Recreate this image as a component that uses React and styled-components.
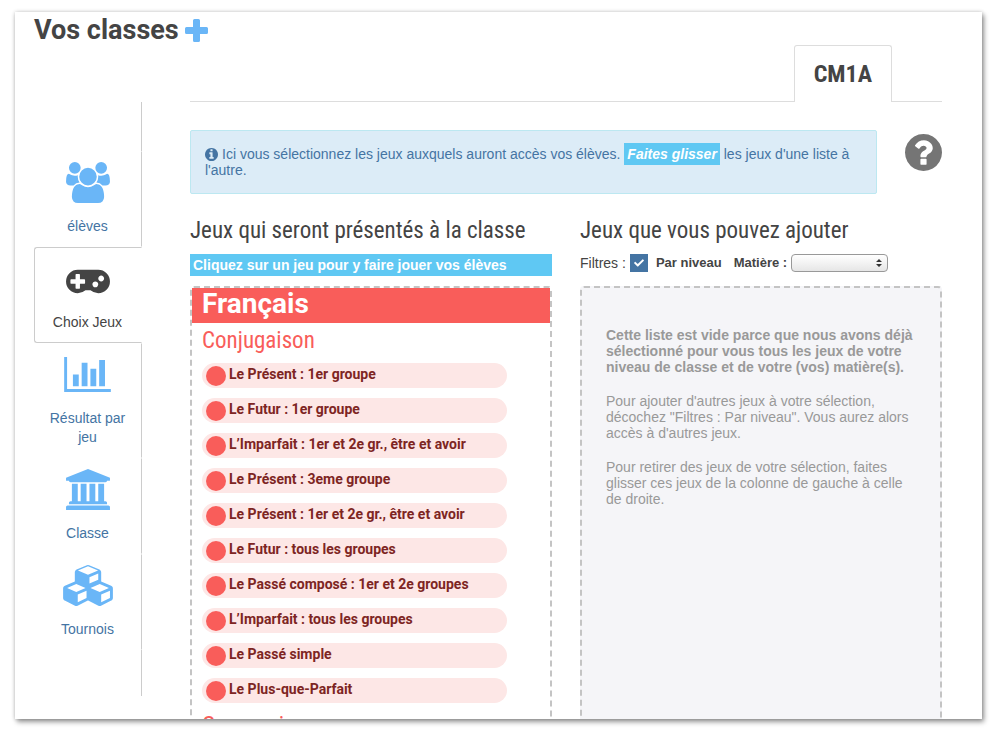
import React, { useState } from 'react';
import styled, { createGlobalStyle } from 'styled-components';
import { FaCheck } from 'react-icons/fa';

const sans = `'Liberation Sans', Arial, sans-serif`;
const condensed = `'Roboto Condensed', 'Liberation Sans Narrow', 'Liberation Sans', sans-serif`;
const rounded = `Roboto, 'Noto Sans', sans-serif`;

const GlobalStyle = createGlobalStyle`
  * {
    box-sizing: border-box;
  }

  body {
    margin: 0;
    background: #fff;
    color: #444;
    font-family: ${sans};
    font-size: 14px;
    line-height: 16px;
  }
`;

const PageWrap = styled.div`
  height: 100vh;
  padding: 12px 25px 26px 15px;
  overflow: hidden;
`;

const Sheet = styled.div`
  height: 100%;
  padding: 0 40px 0 19px;
  overflow: hidden;
  background: #fff;
  box-shadow: 0 0 4px rgba(0, 0, 0, 0.2), 2px 3px 5px rgba(0, 0, 0, 0.4);
`;

const TitleBar = styled.header`
  display: flex;
  align-items: center;
  gap: 6px;
  height: 33px;
  padding-top: 3px;
`;

const Title = styled.h1`
  margin: 0;
  font-family: ${rounded};
  font-size: 27px;
  line-height: 32px;
  font-weight: 700;
`;

const IconButton = styled.button`
  display: block;
  flex: none;
  padding: 0;
  border: 0;
  background: none;
  color: ${props => props.$color};
  cursor: pointer;
`;

const Icon = styled.svg`
  display: block;
  fill: currentColor;
`;

const Tabs = styled.nav`
  display: flex;
  justify-content: flex-end;
  margin-left: 156px;

  &::before {
    content: '';
    flex: 1;
    border-bottom: 1px solid #ddd;
  }

  &::after {
    content: '';
    width: 50px;
    border-bottom: 1px solid #ddd;
  }
`;

const Tab = styled.a`
  padding: 12px 19px;
  border: 1px solid #ddd;
  border-bottom: 0;
  border-radius: 3px 3px 0 0;
  color: #444;
  font-family: ${condensed};
  font-size: 24px;
  line-height: 32px;
  font-weight: 700;
  text-decoration: none;
`;

const Columns = styled.div`
  display: grid;
  grid-template-columns: 108px minmax(0, 1fr);
  gap: 48px;
  align-items: start;
`;

const SideNav = styled.nav`
  display: flex;
  flex-direction: column;

  &::before {
    content: '';
    height: 49px;
    border-right: 1px solid #ccc;
  }

  &::after {
    content: '';
    height: 46px;
    border-right: 1px solid #ccc;
  }
`;

const SideLink = styled.a`
  display: flex;
  flex-direction: column;
  align-items: center;
  padding: 9px 14px 10px 13px;
  border: 1px solid ${props => (props.$active ? '#ccc' : 'transparent')};
  border-right-color: ${props => (props.$active ? 'transparent' : '#ccc')};
  border-radius: ${props => (props.$active ? '3px 0 0 3px' : '0')};
  line-height: 19px;
  text-align: center;
  text-decoration: none;
`;

const SideIcon = styled.span`
  display: flex;
  align-items: center;
  height: 42px;
  margin-bottom: 14px;
  color: ${props => (props.$active ? '#444' : '#6ab6f7')};
`;

const SideLabel = styled.span`
  color: ${props => (props.$active ? '#444' : '#4474a3')};
`;

const Main = styled.main`
  padding-top: 28px;
`;

const InfoRow = styled.div`
  display: flex;
  align-items: flex-start;
  justify-content: space-between;
  gap: 28px;
  margin-bottom: 22px;
`;

const Info = styled.p`
  flex: 1;
  margin: 0;
  padding: 15px 14px;
  border: 1px solid #bce8f1;
  border-radius: 2px;
  background: #dcecf7;
  color: #4474a3;

  svg {
    display: inline-block;
    margin-right: 4px;
    vertical-align: -2px;
  }
`;

const Highlight = styled.em`
  padding: 3px;
  background: #5fc8f3;
  color: #fff;
  font-weight: 700;
`;

const HelpWrap = styled.div`
  padding-top: 4px;
`;

const Lists = styled.div`
  display: grid;
  grid-template-columns: repeat(2, minmax(0, 1fr));
  gap: 28px;
`;

const ListTitle = styled.h2`
  margin: 0 0 8px;
  font-family: ${condensed};
  font-size: 23px;
  line-height: 30px;
  font-weight: 400;
  white-space: nowrap;
`;

const Hint = styled.p`
  margin: 0 0 10px;
  padding: 3px;
  background: #5fc8f3;
  color: #fff;
  font-weight: 700;
`;

const GameList = styled.section`
  border: 2px dashed #c4c4c4;
  border-radius: 4px;
`;

const Subject = styled.h3`
  margin: 0;
  padding: 0 10px 3px;
  background: #f95d5a;
  color: #fff;
  font-family: ${rounded};
  font-size: 28px;
  line-height: 32px;
  font-weight: 700;
`;

const Topic = styled.h4`
  margin: 0;
  padding: 3px 10px 7px;
  color: #f95d5a;
  font-family: ${condensed};
  font-size: 23px;
  line-height: 30px;
  font-weight: 400;
`;

const Games = styled.ul`
  display: flex;
  flex-direction: column;
  gap: 10px;
  width: 88%;
  margin: 0 0 5px;
  padding: 0 0 0 10px;
  list-style: none;
`;

const Game = styled.a`
  display: flex;
  align-items: center;
  gap: 3px;
  height: 25px;
  padding: 0 4px;
  border-radius: 13px;
  background: #fde7e6;
  color: #7d2523;
  font-family: ${rounded};
  font-weight: 700;
  text-decoration: none;

  &::before {
    content: '';
    flex: none;
    width: 20px;
    height: 20px;
    border-radius: 50%;
    background: #f95d5a;
  }
`;

const GameName = styled.span`
  padding-bottom: 3px;
`;

const Filters = styled.form`
  display: flex;
  align-items: center;
  height: 18px;
  margin-bottom: 14px;
`;

const FilterLabel = styled.label`
  margin-right: ${props => props.$gap || 0}px;
  font-size: 13px;
  font-weight: 700;
`;

const Stack = styled.span`
  display: grid;
  align-items: center;
  margin: 0 8px 0 4px;

  > * {
    grid-area: 1 / 1;
  }

  svg {
    justify-self: ${props => props.$justify || 'center'};
    margin-right: ${props => (props.$justify ? 6 : 0)}px;
    color: ${props => props.$color};
    pointer-events: none;
  }
`;

const Checkbox = styled.input`
  appearance: none;
  width: 18px;
  height: 18px;
  margin: 0;
  background: #4474a3;
`;

const Select = styled.select`
  appearance: none;
  width: 97px;
  height: 18px;
  padding: 0 16px 0 6px;
  border: 1px solid #999;
  border-radius: 4px;
  background: linear-gradient(#fff, #e6e6e6);
  font-size: 11px;
`;

const EmptyList = styled.section`
  min-height: 480px;
  padding: 39px 24px;
  border: 2px dashed #c4c4c4;
  border-radius: 4px;
  background: #f5f5f8;
  color: #999;

  p {
    margin: 0 0 18px;
  }
`;

const CIRCLE = 'M1536 896q0 209-103 385.500t-279.500 279.500-385.500 103-385.500-103-279.500-279.500-103-385.500 103-385.500 279.500-279.500 385.500-103 385.500 103 279.500 279.500 103 385.500z';

const icons = {
  plus: {
    box: '0 0 23 23',
    d: 'M9.500 0h4a1.500 1.500 0 0 1 1.500 1.500v6.500h6.500a1.500 1.500 0 0 1 1.500 1.500v4a1.500 1.500 0 0 1-1.500 1.500h-6.500v6.500a1.500 1.500 0 0 1-1.500 1.500h-4a1.500 1.500 0 0 1-1.500-1.500v-6.500h-6.500a1.500 1.500 0 0 1-1.500-1.500v-4a1.500 1.500 0 0 1 1.500-1.500h6.500v-6.500a1.500 1.500 0 0 1 1.500-1.500z',
  },
  users: {
    box: '0 0 1920 1792',
    d: 'M593 896q-162 5-265 128h-134q-82 0-138-40.500t-56-118.500q0-353 124-353 6 0 43.500 21t97.500 42.500 119 21.500q67 0 133-23-5 37-5 66 0 139 81 256zM1664 1533q0 120-73 189.500t-194 69.500h-874q-121 0-194-69.500t-73-189.500q0-53 3.500-103.500t14-109 26.500-108.500 43-97.500 62-81 85.500-53.500 111.500-20q10 0 43 21.500t73 48 107 48 135 21.500 135-21.500 107-48 73-48 43-21.500q61 0 111.500 20t85.500 53.500 62 81 43 97.500 26.500 108.500 14 109 3.500 103.500zM640 256q0 106-75 181t-181 75-181-75-75-181 75-181 181-75 181 75 75 181zM1344 640q0 159-112.500 271.500t-271.500 112.500-271.500-112.500-112.500-271.500 112.500-271.500 271.500-112.500 271.500 112.500 112.500 271.500zM1920 865q0 78-56 118.500t-138 40.500h-134q-103-123-265-128 81-117 81-256 0-29-5-66 66 23 133 23 59 0 119-21.500t97.500-42.500 43.500-21q124 0 124 353zM1792 256q0 106-75 181t-181 75-181-75-75-181 75-181 181-75 181 75 75 181z',
  },
  gamepad: {
    box: '0 0 1920 1792',
    d: 'M832 1088v-128q0-14-9-23t-23-9h-192v-192q0-14-9-23t-23-9h-128q-14 0-23 9t-9 23v192h-192q-14 0-23 9t-9 23v128q0 14 9 23t23 9h192v192q0 14 9 23t23 9h128q14 0 23-9t9-23v-192h192q14 0 23-9t9-23zM1408 1152q0-53-37.500-90.500t-90.500-37.500-90.500 37.500-37.500 90.500 37.500 90.500 90.500 37.500 90.500-37.500 37.500-90.500zM1664 896q0-53-37.500-90.500t-90.500-37.500-90.500 37.500-37.500 90.500 37.500 90.500 90.500 37.500 90.500-37.500 37.500-90.500zM1920 1024q0 212-150 362t-362 150q-192 0-338-128h-220q-146 128-338 128-212 0-362-150t-150-362 150-362 362-150h896q212 0 362 150t150 362z',
  },
  chart: {
    box: '0 0 2048 1536',
    d: 'M640 768v512h-256v-512h256zM1024 256v1024h-256v-1024h256zM2048 1408v128h-2048v-1536h128v1408h1920zM1408 512v768h-256v-768h256zM1792 128v1152h-256v-1152h256z',
  },
  school: {
    box: '0 0 1920 1792',
    d: 'M960 0l960 384v128h-128q0 26-20.500 45t-48.500 19h-1526q-28 0-48.500-19t-20.500-45h-128v-128zM256 640h256v768h128v-768h256v768h128v-768h256v768h128v-768h256v768h59q28 0 48.500 19t20.500 45v64h-1664v-64q0-26 20.500-45t48.500-19h59v-768zM1851 1600q28 0 48.500 19t20.500 45v128h-1920v-128q0-26 20.500-45t48.500-19h1782z',
  },
  cubes: {
    box: '0 0 2176 1792',
    d: 'M640 1632l384-192v-314l-384 164v342zM576 1178l404-173-404-173-404 173zM1664 1632l384-192v-314l-384 164v342zM1600 1178l404-173-404-173-404 173zM1152 807l384-165v-266l-384 164v267zM1088 430l441-189-441-189-441 189zM2176 1024v416q0 36-19 67t-52 47l-448 224q-25 14-57 14t-57-14l-448-224q-4-2-7-4-2 2-7 4l-448 224q-25 14-57 14t-57-14l-448-224q-33-16-52-47t-19-67v-416q0-38 21.500-70t56.500-48l434-186v-400q0-38 21.500-70t56.500-48l448-192q23-10 50-10t50 10l448 192q35 16 56.500 48t21.500 70v400l434 186q36 16 57 48t21 70z',
  },
  help: {
    box: '0 128 1536 1536',
    d: `M896 1376v-192q0-14-9-23t-23-9h-192q-14 0-23 9t-9 23v192q0 14 9 23t23 9h192q14 0 23-9t9-23zM1152 704q0-88-55.500-163t-138.500-116-170-41q-243 0-371 213-15 24 8 42l132 100q7 6 19 6 16 0 25-12 53-68 86-92 34-24 86-24 48 0 85.500 26t37.500 59q0 38-20 61t-68 45q-63 28-115.500 86.500t-52.500 125.500v36q0 14 9 23t23 9h192q14 0 23-9t9-23q0-19 21.500-49.500t54.500-49.500q32-18 49-28.500t46-35 44.500-48 28-60.500 12.500-81z${CIRCLE}`,
  },
  info: {
    box: '0 128 1536 1536',
    d: `M1024 1376v-160q0-14-9-23t-23-9h-96v-512q0-14-9-23t-23-9h-320q-14 0-23 9t-9 23v160q0 14 9 23t23 9h96v320h-96q-14 0-23 9t-9 23v160q0 14 9 23t23 9h448q14 0 23-9t9-23zM896 480v-160q0-14-9-23t-23-9h-192q-14 0-23 9t-9 23v160q0 14 9 23t23 9h192q14 0 23-9t9-23z${CIRCLE}`,
  },
  upDown: {
    box: '0 0 6 8',
    d: 'M3 0l3 3h-6zM3 8l-3-3h6z',
  },
};

const Glyph = ({ name, width, height }) => (
  <Icon viewBox={icons[name].box} width={width} height={height} fillRule="evenodd" aria-hidden="true">
    <path d={icons[name].d} />
  </Icon>
);

const sections = [
  { label: 'élèves', icon: 'users', width: 44, height: 41 },
  { label: 'Choix Jeux', icon: 'gamepad', width: 44, height: 41, active: true },
  { label: 'Résultat par jeu', icon: 'chart', width: 47, height: 35 },
  { label: 'Classe', icon: 'school', width: 44, height: 41 },
  { label: 'Tournois', icon: 'cubes', width: 50, height: 41 },
];

const games = [
  'Le Présent : 1er groupe',
  'Le Futur : 1er groupe',
  'L’Imparfait : 1er et 2e gr., être et avoir',
  'Le Présent : 3eme groupe',
  'Le Présent : 1er et 2e gr., être et avoir',
  'Le Futur : tous les groupes',
  'Le Passé composé : 1er et 2e groupes',
  'L’Imparfait : tous les groupes',
  'Le Passé simple',
  'Le Plus-que-Parfait',
];

const App = () => {
  const [byLevel, setByLevel] = useState(true);

  return (
    <PageWrap>
      <GlobalStyle />
      <Sheet>
        <TitleBar>
          <Title>Vos classes</Title>
          <IconButton type="button" $color="#6ab6f7" aria-label="Ajouter une classe">
            <Glyph name="plus" width={23} height={23} />
          </IconButton>
        </TitleBar>
        <Tabs>
          <Tab href="#cm1a">CM1A</Tab>
        </Tabs>
        <Columns>
          <SideNav>
            {sections.map(({ label, icon, width, height, active }) => (
              <SideLink key={label} href={`#${icon}`} $active={active}>
                <SideIcon $active={active}>
                  <Glyph name={icon} width={width} height={height} />
                </SideIcon>
                <SideLabel $active={active}>{label}</SideLabel>
              </SideLink>
            ))}
          </SideNav>
          <Main>
            <InfoRow>
              <Info>
                <Glyph name="info" width={13} height={13} />
                Ici vous sélectionnez les jeux auxquels auront accès vos élèves.{' '}
                <Highlight>Faites glisser</Highlight> les jeux d'une liste à l'autre.
              </Info>
              <HelpWrap>
                <IconButton type="button" $color="#757575" aria-label="Aide">
                  <Glyph name="help" width={37} height={37} />
                </IconButton>
              </HelpWrap>
            </InfoRow>
            <Lists>
              <div>
                <ListTitle>Jeux qui seront présentés à la classe</ListTitle>
                <Hint>Cliquez sur un jeu pour y faire jouer vos élèves</Hint>
                <GameList>
                  <Subject>Français</Subject>
                  <Topic>Conjugaison</Topic>
                  <Games>
                    {games.map(game => (
                      <li key={game}>
                        <Game href="#jeu">
                          <GameName>{game}</GameName>
                        </Game>
                      </li>
                    ))}
                  </Games>
                  <Topic>Grammaire</Topic>
                </GameList>
              </div>
              <div>
                <ListTitle>Jeux que vous pouvez ajouter</ListTitle>
                <Filters>
                  <span>Filtres :</span>
                  <Stack $color="#fff">
                    <Checkbox
                      id="niveau"
                      type="checkbox"
                      checked={byLevel}
                      onChange={e => setByLevel(e.target.checked)}
                    />
                    {byLevel && <FaCheck size={10} />}
                  </Stack>
                  <FilterLabel htmlFor="niveau" $gap={12}>Par niveau</FilterLabel>
                  <FilterLabel htmlFor="matiere">Matière :</FilterLabel>
                  <Stack $color="#333" $justify="end">
                    <Select id="matiere" defaultValue="">
                      <option value="" />
                      <option>Français</option>
                    </Select>
                    <Glyph name="upDown" width={6} height={8} />
                  </Stack>
                </Filters>
                <EmptyList>
                  <p>
                    <strong>
                      Cette liste est vide parce que nous avons déjà sélectionné pour vous tous les jeux
                      de votre niveau de classe et de votre (vos) matière(s).
                    </strong>
                  </p>
                  <p>
                    Pour ajouter d'autres jeux à votre sélection, décochez "Filtres : Par niveau". Vous
                    aurez alors accès à d'autres jeux.
                  </p>
                  <p>
                    Pour retirer des jeux de votre sélection, faites glisser ces jeux de la colonne de
                    gauche à celle de droite.
                  </p>
                </EmptyList>
              </div>
            </Lists>
          </Main>
        </Columns>
      </Sheet>
    </PageWrap>
  );
};

export default App;
